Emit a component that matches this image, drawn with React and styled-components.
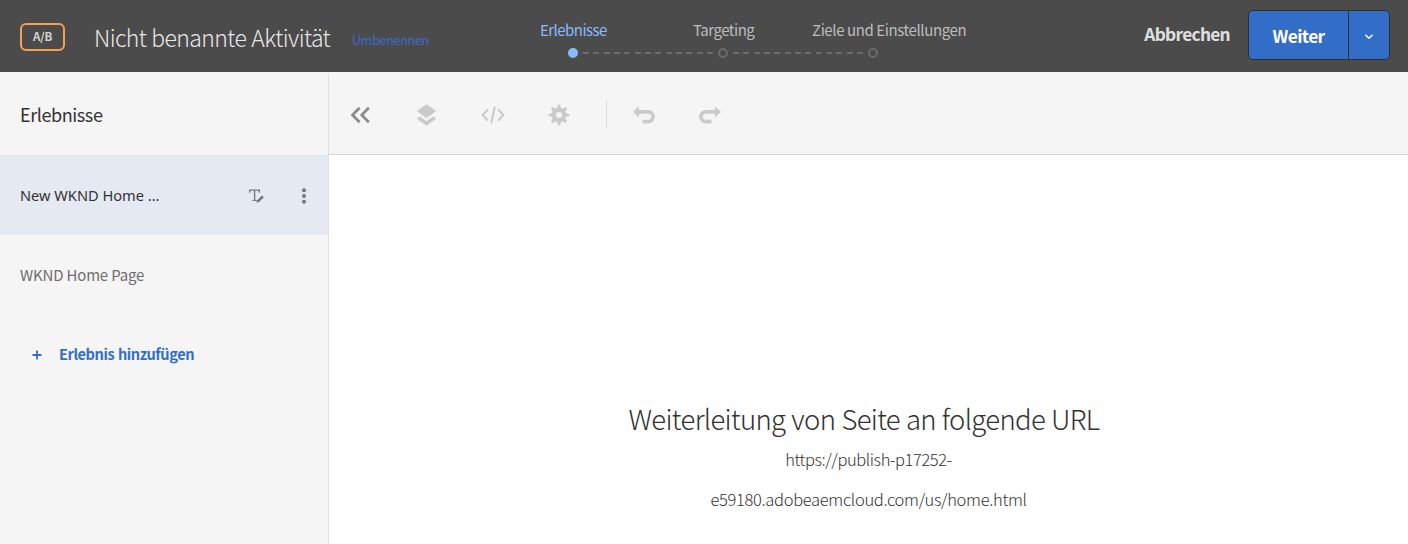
import React from 'react';
import styled, { createGlobalStyle } from 'styled-components';

const GlobalStyle = createGlobalStyle`
  *, *::before, *::after { box-sizing: border-box; }
  body {
    margin: 0;
    background: #fff;
    color: #323232;
    font-family: "Noto Sans CJK JP", "Noto Sans", sans-serif;
    font-kerning: normal;
  }
  button { border: 0; padding: 0; margin: 0; background: none; font: inherit; color: inherit; }
`;

const Page = styled.div`
  display: flex;
  flex-direction: column;
  width: 1408px;
  height: 544px;
  overflow: hidden;
`;

const Header = styled.header`
  display: flex;
  flex: none;
  height: 72px;
  background: #4b4b4b;
`;

const Identity = styled.div`
  display: flex;
  width: 498px;
  padding-left: 20px;
`;

const TypeBadge = styled.span`
  width: 45px;
  height: 28px;
  margin-top: 23px;
  border: 2px solid #f6a050;
  border-radius: 6px;
  color: #d4d4d4;
  font-size: 11.5px;
  font-weight: 700;
  line-height: 22px;
  letter-spacing: -0.2px;
  text-align: center;
`;

const Title = styled.h1`
  margin: 17px 0 0 29px;
  color: #e8e8e8;
  font-size: 23px;
  font-weight: 300;
  line-height: 40px;
  letter-spacing: -0.6px;
  word-spacing: 0.5px;
  white-space: nowrap;
`;

const Rename = styled.a`
  margin: 29px 0 0 22px;
  color: #3b6bd0;
  font-size: 12.5px;
  line-height: 21px;
  letter-spacing: -0.28px;
`;

const Steps = styled.ol`
  display: grid;
  grid-template-columns: repeat(3, 150px);
  margin: 0;
  padding: 20px 0 0;
  list-style: none;
`;

const Step = styled.li`
  display: flex;
  flex-direction: column;
  color: ${p => (p.$active ? '#87bbfd' : '#bdbdbd')};
`;

const StepLabel = styled.span`
  padding-left: ${p => p.$indent}px;
  font-size: 15px;
  line-height: 20px;
  letter-spacing: ${p => p.$tracking}px;
  white-space: nowrap;
`;

const StepTrack = styled.span`
  display: flex;
  align-items: center;
  height: 10px;
  margin: 8px 0 0 70px;
`;

const Dot = styled.span`
  flex: none;
  width: 10px;
  height: 10px;
  border: 2px solid ${p => (p.$active ? '#87bbfd' : '#6b6b6b')};
  border-radius: 50%;
  background: ${p => (p.$active ? '#87bbfd' : 'transparent')};
`;

const Dashes = styled.span`
  flex: none;
  width: 130px;
  height: 2px;
  margin-left: 5px;
  background: repeating-linear-gradient(90deg, #6b6b6b 0 6px, transparent 6px 10.333px);
`;

const Actions = styled.div`
  display: flex;
  margin-left: auto;
  padding: 10px 18px 0 0;
`;

const CancelButton = styled.button`
  height: 47px;
  margin-right: 18px;
  color: #e0e0e0;
  font-size: 17.3px;
  font-weight: 700;
  line-height: 47px;
  letter-spacing: -0.7px;
`;

const SplitButton = styled.div`
  display: flex;
  width: 142px;
  height: 50px;
  overflow: hidden;
  border: 1px solid #303030;
  border-radius: 5px;
  background: #326ec8;
  color: #fff;
`;

const PrimaryButton = styled.button`
  width: 100px;
  border-right: 1px solid #303030;
  font-size: 17.3px;
  font-weight: 700;
  line-height: 49px;
  letter-spacing: -0.6px;
`;

const MenuButton = styled.button`
  display: flex;
  flex: 1;
  align-items: center;
  justify-content: center;
  padding-top: 4px;
`;

const Body = styled.div`
  display: flex;
  flex: 1;
  min-height: 0;
  padding-top: 3px;
  background: #f5f5f5;
`;

const Sidebar = styled.aside`
  width: 329px;
  border-right: 1px solid #dfdfdf;
  background: #f5f5f5;
`;

const SidebarTitle = styled.h2`
  height: 80px;
  margin: 0;
  padding-left: 20px;
  color: #323232;
  font-size: 18px;
  font-weight: 400;
  line-height: 78px;
  letter-spacing: -0.41px;
`;

const Experience = styled.div`
  display: flex;
  align-items: center;
  height: 80px;
  padding-left: 20px;
  background: ${p => (p.$selected ? '#e5e9f2' : 'transparent')};
  color: ${p => (p.$selected ? '#323232' : '#6e6e6e')};
`;

const ExperienceName = styled.span`
  width: 228px;
  font-family: ${p => (p.$selected ? '"Noto Sans"' : '"Noto Sans CJK JP"')}, sans-serif;
  font-size: ${p => (p.$selected ? 14.6 : 15)}px;
  line-height: 22px;
  letter-spacing: ${p => (p.$selected ? 0 : -0.18)}px;
`;

const RowIcon = styled.svg`
  display: block;
  flex: none;
  margin-top: 1px;
  margin-right: ${p => p.$gap || 0}px;
`;

const AddExperience = styled.button`
  display: flex;
  align-items: center;
  height: 40px;
  margin: 20px 0 0 32px;
  color: #326ec8;
  font-size: 14.6px;
  font-weight: 700;
  letter-spacing: -0.45px;
  word-spacing: 0.8px;
  line-height: 38px;
`;

const AddLabel = styled.span`
  height: 40px;
  margin-left: 17px;
`;

const Main = styled.main`
  display: flex;
  flex: 1;
  flex-direction: column;
  min-width: 0;
  background: #fff;
`;

const Toolbar = styled.div`
  display: flex;
  align-items: center;
  height: 80px;
  padding: 1px 0 0 16px;
  border-bottom: 1px solid #d4d4d4;
  background: #f5f5f5;
`;

const ToolButton = styled.button`
  display: flex;
  align-items: center;
  justify-content: center;
  width: 32px;
  height: 32px;
  margin-right: ${p => p.$gap}px;
  color: ${p => (p.$enabled ? '#8a8a8a' : '#cacaca')};
`;

const Divider = styled.span`
  width: 1px;
  height: 30px;
  margin: 0 21px 2px 0;
  background: #dedede;
`;

const Redirect = styled.section`
  display: flex;
  flex-direction: column;
  align-items: center;
  padding-top: 243px;
  font-weight: 300;
`;

const RedirectTitle = styled.h3`
  margin: 0;
  padding-right: 9px;
  font-size: 27.5px;
  font-weight: 300;
  line-height: 41px;
  letter-spacing: -0.68px;
  word-spacing: 0.6px;
`;

const RedirectUrl = styled.div`
  width: 340px;
  font-size: 16.5px;
  line-height: 40px;
  letter-spacing: ${p => p.$tracking}px;
  text-align: center;
`;

function Tool({ enabled, gap = 34, children }) {
  return (
    <ToolButton $enabled={enabled} $gap={gap}>
      <svg width="24" height="24" viewBox="0 0 24 24" fill="none">{children}</svg>
    </ToolButton>
  );
}

const steps = [
  { label: 'Erlebnisse', indent: 42, tracking: -0.53, active: true },
  { label: 'Targeting', indent: 45, tracking: -0.48 },
  { label: 'Ziele und Einstellungen', indent: 14, tracking: -0.4 },
];

const gearAngles = [0, 45, 90, 135, 180, 225, 270, 315];

export default function App() {
  return (
    <>
      <GlobalStyle />
      <Page>
        <Header>
          <Identity>
            <TypeBadge>A/B</TypeBadge>
            <Title>Nicht benannte Aktivität</Title>
            <Rename>Umbenennen</Rename>
          </Identity>
          <Steps>
            {steps.map((s, i) => (
              <Step key={s.label} $active={s.active}>
                <StepLabel $indent={s.indent} $tracking={s.tracking}>{s.label}</StepLabel>
                <StepTrack>
                  <Dot $active={s.active} />
                  {i < steps.length - 1 && <Dashes />}
                </StepTrack>
              </Step>
            ))}
          </Steps>
          <Actions>
            <CancelButton>Abbrechen</CancelButton>
            <SplitButton>
              <PrimaryButton>Weiter</PrimaryButton>
              <MenuButton>
                <svg width="10" height="6" viewBox="0 0 10 6" fill="none">
                  <path d="M1.8 1.2 5 4.2 8.2 1.2" stroke="#fff" strokeWidth="1.5" strokeLinecap="round" strokeLinejoin="round" />
                </svg>
              </MenuButton>
            </SplitButton>
          </Actions>
        </Header>
        <Body>
          <Sidebar>
            <SidebarTitle>Erlebnisse</SidebarTitle>
            <Experience $selected>
              <ExperienceName $selected>New WKND Home ...</ExperienceName>
              <RowIcon $gap={36} width="18" height="18" viewBox="0 0 18 18">
                <path d="M1 2.500H12v3.300h-1l-.6-2H7.300v8.900l1.500.5v.8H4.400v-.8l1.500-.5V3.800H2.600l-.6 2H1z" fill="#7a7a7a" />
                <path d="m8.400 15.800.8-2.600 4.900-4.700 1.800 1.800-4.900 4.700z" fill="#747474" />
              </RowIcon>
              <RowIcon width="4" height="16" viewBox="0 0 4 16" fill="#747474">
                <circle cx="2" cy="2.200" r="2" />
                <circle cx="2" cy="8" r="2" />
                <circle cx="2" cy="13.800" r="2" />
              </RowIcon>
            </Experience>
            <Experience>
              <ExperienceName>WKND Home Page</ExperienceName>
            </Experience>
            <AddExperience>
              <svg width="10" height="10" viewBox="0 0 10 10">
                <path d="M5 .5v9M.5 5h9" stroke="#326ec8" strokeWidth="1.800" />
              </svg>
              <AddLabel>Erlebnis hinzufügen</AddLabel>
            </AddExperience>
          </Sidebar>
          <Main>
            <Toolbar>
              <Tool enabled>
                <path d="M10.600 4.700 3.500 12l7.100 7.300M19.800 4.700 12.700 12l7.100 7.300" stroke="currentColor" strokeWidth="2.700" />
              </Tool>
              <Tool>
                <path d="M11.500 1.200 21.300 8l-9.800 7-9.800-7z" fill="currentColor" />
                <path d="m1.700 15.700 3.100-2.200 6.700 4.700 6.700-4.700 3.100 2.200-9.800 7z" fill="currentColor" />
              </Tool>
              <Tool>
                <path d="M6.300 7 1.700 12l4.600 5M17.700 7l4.600 5-4.600 5M13.600 4.500l-3.200 15" stroke="currentColor" strokeWidth="2.100" strokeLinecap="round" />
              </Tool>
              <Tool gap={31}>
                <circle cx="12" cy="12" r="5.200" stroke="currentColor" strokeWidth="4.400" />
                {gearAngles.map(a => (
                  <path key={a} d="M12 6V3.200" stroke="currentColor" strokeWidth="3.200" strokeLinecap="round" transform={`rotate(${a} 12 12)`} />
                ))}
              </Tool>
              <Divider />
              <Tool>
                <path d="M6 8.800h10.200a4.800 4.800 0 0 1 0 9.800H10.500" stroke="currentColor" strokeWidth="3.700" />
                <path d="M1 8.800 7 3.200v11.200z" fill="currentColor" />
              </Tool>
              <Tool gap={0}>
                <path d="M18 8.800H7.800a4.800 4.800 0 0 0 0 9.800H13.500" stroke="currentColor" strokeWidth="3.700" />
                <path d="M23 8.800 17 3.200v11.200z" fill="currentColor" />
              </Tool>
            </Toolbar>
            <Redirect>
              <RedirectTitle>Weiterleitung von Seite an folgende URL</RedirectTitle>
              <RedirectUrl $tracking={-0.42}>https://publish-p17252-</RedirectUrl>
              <RedirectUrl $tracking={-0.32}>e59180.adobeaemcloud.com/us/home.html</RedirectUrl>
            </Redirect>
          </Main>
        </Body>
      </Page>
    </>
  );
}
